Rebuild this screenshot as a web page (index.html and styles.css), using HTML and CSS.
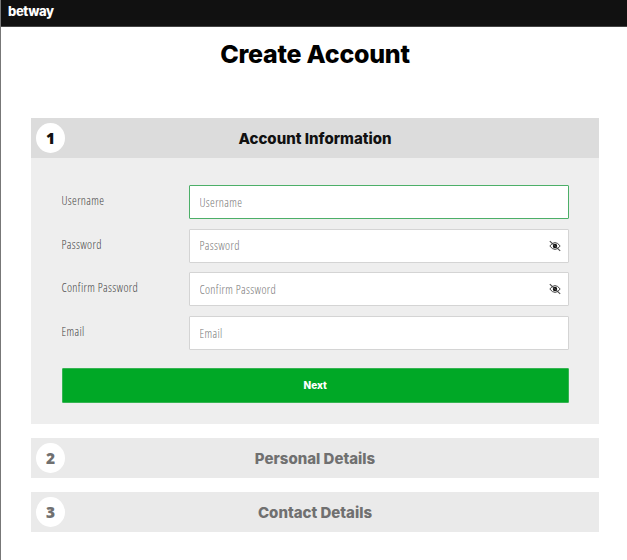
FILE: index.html
```html
<!DOCTYPE html>
<html lang="en">
<head>
    <meta charset="UTF-8">
    <meta name="viewport" content="width=device-width, initial-scale=1.0">
    <title>Create Account - betway</title>
    <link rel="stylesheet" href="styles.css">
</head>
<body>
    <header class="topbar">
        <span class="logo">betway</span>
    </header>

    <main class="page">
        <h1 class="title">Create Account</h1>

        <!-- Step 1 -->
        <section class="step active">
            <div class="step-header">
                <span class="step-number">1</span>
                <h2 class="step-title">Account Information</h2>
            </div>
            <form class="step-body">
                <div class="field">
                    <label for="username">Username</label>
                    <div class="input-box focused">
                        <input id="username" type="text" placeholder="Username">
                    </div>
                </div>
                <div class="field">
                    <label for="password">Password</label>
                    <div class="input-box">
                        <input id="password" type="password" placeholder="Password">
                        <svg class="eye" viewBox="0 0 12 12">
                            <path d="M.8 6Q6 -.8 11.2 6Q6 12.8 .8 6Z" fill="none" stroke="#444" stroke-width="1"/>
                            <circle cx="6" cy="6" r="2.2" fill="#111"/>
                            <path d="M.8 1.2L11.2 10.8" stroke="#444" stroke-width="1.1"/>
                        </svg>
                    </div>
                </div>
                <div class="field">
                    <label for="confirm">Confirm Password</label>
                    <div class="input-box">
                        <input id="confirm" type="password" placeholder="Confirm Password">
                        <svg class="eye" viewBox="0 0 12 12">
                            <path d="M.8 6Q6 -.8 11.2 6Q6 12.8 .8 6Z" fill="none" stroke="#444" stroke-width="1"/>
                            <circle cx="6" cy="6" r="2.2" fill="#111"/>
                            <path d="M.8 1.2L11.2 10.8" stroke="#444" stroke-width="1.1"/>
                        </svg>
                    </div>
                </div>
                <div class="field">
                    <label for="email">Email</label>
                    <div class="input-box">
                        <input id="email" type="text" placeholder="Email">
                    </div>
                </div>
                <button type="button" class="btn-next">Next</button>
            </form>
        </section>

        <!-- Step 2 -->
        <section class="step">
            <div class="step-header">
                <span class="step-number">2</span>
                <h2 class="step-title">Personal Details</h2>
            </div>
        </section>

        <!-- Step 3 -->
        <section class="step">
            <div class="step-header">
                <span class="step-number">3</span>
                <h2 class="step-title">Contact Details</h2>
            </div>
        </section>
    </main>
</body>
</html>
```
FILE: styles.css
```css
* {
    box-sizing: border-box;
}

body {
    margin: 0;
    height: 560px;
    overflow: hidden;
    border-left: 1px solid #777;
    background-color: #fff;
    font-family: Inter, "Noto Sans", sans-serif;
}

.topbar {
    height: 27px;
    padding: 1px 0 0 7px;
    background-color: #111;
    border-bottom: 1px solid #444;
}

.logo {
    display: block;
    color: #fff;
    font-size: 13px;
    font-weight: 800;
    line-height: 20px;
    letter-spacing: -0.4px;
}

.page {
    padding: 0 28px 0 30px;
}

.title {
    margin: 10px 0 45.5px;
    height: 35px;
    font-size: 25px;
    font-weight: 800;
    line-height: 35px;
    letter-spacing: -0.25px;
    text-align: center;
    color: #000;
}

.step {
    margin-bottom: 13.7px;
    background-color: #eaeaea;
    color: #707070;
}

.step.active {
    background-color: #eee;
    color: #111;
}

.step-header {
    display: flex;
    align-items: center;
    height: 40.5px;
    padding: 0 34px 0 5px;
}

.step.active .step-header {
    background-color: #dcdcdc;
}

.step-number {
    width: 29px;
    height: 30px;
    border-radius: 50%;
    background-color: #fff;
    font-family: "Open Sans", sans-serif;
    font-size: 15.5px;
    font-weight: 800;
    line-height: 30px;
    text-align: center;
}

.step-title {
    flex: 1;
    margin: 0;
    padding-top: 1px;
    font-size: 15px;
    font-weight: 800;
    text-align: center;
    white-space: nowrap;
}

.step-body {
    height: 266px;
    padding: 27px 30px 0 30.5px;
}

.field {
    display: flex;
    height: 34px;
    margin-bottom: 9.7px;
}

.field label {
    width: 127px;
    font-family: "Open Sans", sans-serif;
    font-size: 12px;
    font-stretch: 82%;
    font-weight: 300;
    line-height: 31px;
    letter-spacing: 0.35px;
    color: #444;
}

.input-box {
    flex: 1;
    display: flex;
    align-items: center;
    padding: 0 7.5px 0 10px;
    background-color: #fff;
    border: 1px solid #d4d4d4;
    border-radius: 1px;
}

.input-box.focused {
    border-color: #4caf68;
}

.input-box input {
    flex: 1;
    min-width: 0;
    padding: 0;
    border: none;
    outline: none;
    background: none;
    font-family: "Open Sans", sans-serif;
    font-size: 12px;
    font-stretch: 82%;
    font-weight: 300;
    letter-spacing: 0.35px;
}

.input-box input::placeholder {
    color: #777;
}

.eye {
    width: 12px;
    height: 12px;
}

.btn-next {
    display: block;
    width: 100%;
    height: 35px;
    margin-top: 17.5px;
    padding: 0;
    border: 1px solid #35b452;
    border-radius: 1px;
    background-color: #00a826;
    color: #fff;
    font-family: inherit;
    font-size: 10px;
    font-weight: 800;
}
```
